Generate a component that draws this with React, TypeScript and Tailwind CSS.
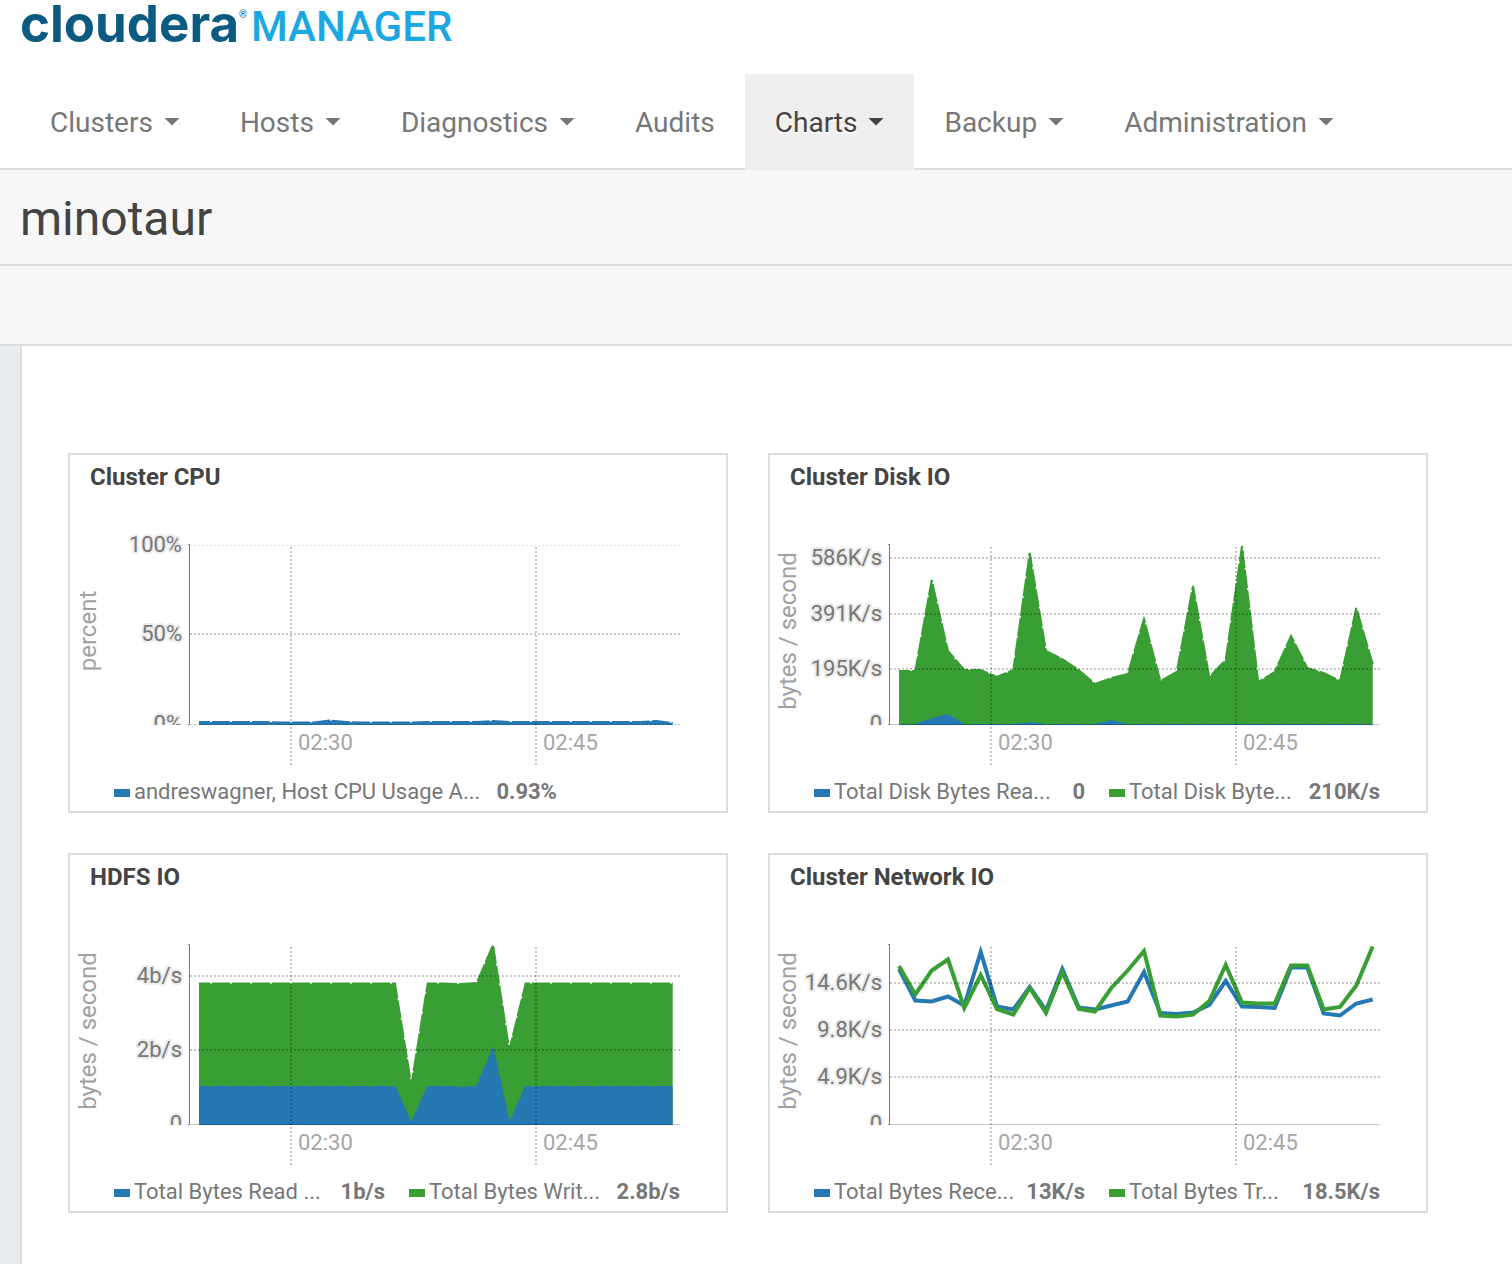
import React, { useId } from "react";

const BLUE = "#2678b2";
const GREEN = "#399e34";

type Tick = { y: number; label: string; faint?: boolean };
type Series = { color: string; values: number[] };
type LegendEntry = { color: string; name: string; value: string };
type ChartSpec = {
  title: string;
  unit: string;
  kind: "area" | "line";
  ticks: Tick[];
  zeroLabel: string;
  dottedBase?: boolean;
  series: Series[];
  legend: LegendEntry[];
};

const PLOT_LEFT = 120;
const PLOT_RIGHT = 610;
const BASE = 224;
const FIRST_X = 129;
const STEP = 49 / 3;

const charts: ChartSpec[] = [
  {
    title: "Cluster CPU",
    unit: "percent",
    kind: "area",
    ticks: [
      { y: 45, label: "100%", faint: true },
      { y: 134, label: "50%" },
    ],
    zeroLabel: "0%",
    dottedBase: true,
    series: [
      {
        color: BLUE,
        values: [
          222, 222, 222, 222, 222, 222.5, 222.5, 222.5, 220.5, 222, 222.5, 222.5, 222.5, 222.5, 222, 222, 222, 222,
          221, 222, 222, 222, 222, 222, 222, 222, 222, 222, 221, 223,
        ],
      },
    ],
    legend: [{ color: BLUE, name: "andreswagner, Host CPU Usage A...", value: "0.93%" }],
  },
  {
    title: "Cluster Disk IO",
    unit: "bytes / second",
    kind: "area",
    ticks: [
      { y: 58, label: "586K/s" },
      { y: 114, label: "391K/s" },
      { y: 169, label: "195K/s" },
    ],
    zeroLabel: "0",
    series: [
      {
        color: GREEN,
        values: [
          171, 171, 80, 151, 170, 170, 177, 170, 53, 151, 159, 170, 184, 178, 174, 119, 181, 172, 86, 177, 160, 46,
          182, 172, 136, 168, 173, 181, 108, 164,
        ],
      },
      {
        color: BLUE,
        values: [
          225, 225, 219, 215, 225, 225, 225, 225, 223, 225, 225, 225, 225, 221, 225, 225, 225, 225, 225, 225, 225,
          225, 225, 225, 225, 225, 225, 225, 225, 225,
        ],
      },
    ],
    legend: [
      { color: BLUE, name: "Total Disk Bytes Rea...", value: "0" },
      { color: GREEN, name: "Total Disk Byte...", value: "210K/s" },
    ],
  },
  {
    title: "HDFS IO",
    unit: "bytes / second",
    kind: "area",
    ticks: [
      { y: 76, label: "4b/s" },
      { y: 150, label: "2b/s" },
    ],
    zeroLabel: "0",
    series: [
      {
        color: GREEN,
        values: [
          83.5, 83.5, 83.5, 83.5, 83.5, 83.5, 83.5, 83.5, 83.5, 83.5, 83.5, 83.5, 83.5, 185, 83.5, 83.5, 84, 83, 45,
          150, 83.5, 83.5, 83.5, 83.5, 83.5, 83.5, 83.5, 83.5, 83.5, 83.5,
        ],
      },
      {
        color: BLUE,
        values: [
          187, 187, 187, 187, 187, 187, 187, 187, 187, 187, 187, 187, 187, 224, 187, 187, 187.5, 187, 149, 224, 187,
          187, 187, 187, 187, 187, 187, 187, 187, 187,
        ],
      },
    ],
    legend: [
      { color: BLUE, name: "Total Bytes Read ...", value: "1b/s" },
      { color: GREEN, name: "Total Bytes Writ...", value: "2.8b/s" },
    ],
  },
  {
    title: "Cluster Network IO",
    unit: "bytes / second",
    kind: "line",
    ticks: [
      { y: 83, label: "14.6K/s" },
      { y: 130, label: "9.8K/s" },
      { y: 177, label: "4.9K/s" },
    ],
    zeroLabel: "0",
    series: [
      {
        color: BLUE,
        values: [
          69, 100.5, 101.5, 96.5, 105.5, 52, 106.5, 109.5, 87, 110.5, 69, 107.5, 109.5, 105.5, 101.5, 72, 113, 114,
          112.5, 105, 81, 106.5, 107, 108, 67.5, 67.5, 113.5, 115.5, 103.5, 99.5,
        ],
      },
      {
        color: GREEN,
        values: [
          66, 94.5, 70.5, 59.5, 108, 75, 109, 114.5, 88, 113, 72, 109, 111.5, 88, 70.5, 51, 115.5, 116.5, 114.5, 101,
          65, 102.5, 103.5, 103.5, 65.5, 65.5, 109.5, 107, 85.5, 46.5,
        ],
      },
    ],
    legend: [
      { color: BLUE, name: "Total Bytes Rece...", value: "13K/s" },
      { color: GREEN, name: "Total Bytes Tr...", value: "18.5K/s" },
    ],
  },
];

const timeMarks = [
  { x: 221, label: "02:30" },
  { x: 466, label: "02:45" },
];

function toPath(values: number[]) {
  return values.map((y, i) => `${i === 0 ? "M" : "L"}${(FIRST_X + i * STEP).toFixed(1)} ${y}`).join("");
}

function Plot({ spec }: { spec: ChartSpec }) {
  const clipId = useId();
  const lastX = (FIRST_X + (spec.series[0].values.length - 1) * STEP).toFixed(1);
  return (
    <svg viewBox="0 0 656 270" className="block w-full text-[22px]" role="img" aria-label={`${spec.title} chart`}>
      <defs>
        <clipPath id={clipId}>
          <rect x="0" y="0" width="656" height="225" />
        </clipPath>
      </defs>
      <text x="26" y="131" transform="rotate(-90 26 131)" textAnchor="middle" fill="#a0a0a0" className="text-[24px]">
        {spec.unit}
      </text>
      <g clipPath={`url(#${clipId})`}>
        {spec.series.map((s) =>
          spec.kind === "area" ? (
            <g key={s.color}>
              <path d={`${toPath(s.values)}L${lastX} 225L${FIRST_X} 225Z`} fill={s.color} />
              <path
                d={toPath(s.values)}
                fill="none"
                stroke={s.color}
                strokeWidth="2"
                strokeDasharray="18 2"
                strokeDashoffset="7"
              />
            </g>
          ) : (
            <path key={s.color} d={toPath(s.values)} fill="none" stroke={s.color} strokeWidth="4" />
          ),
        )}
        <g fill="#777777" stroke="#ebebeb" strokeWidth="4" strokeLinejoin="round" textAnchor="end" style={{ paintOrder: "stroke" }}>
          {[...spec.ticks, { y: BASE, label: spec.zeroLabel }].map((t) => (
            <text key={t.label} x="112" y={t.y + 7}>
              {t.label}
            </text>
          ))}
        </g>
      </g>
      <g stroke="#000000" strokeOpacity="0.22" strokeWidth="2" strokeDasharray="2 2">
        {spec.ticks.map((t) => (
          <path
            key={t.label}
            d={`M${PLOT_LEFT} ${t.faint ? t.y + 0.5 : t.y}H${PLOT_RIGHT}`}
            strokeWidth={t.faint ? 1 : 2}
            strokeOpacity={t.faint ? 0.12 : 0.22}
          />
        ))}
        {timeMarks.map((m) => (
          <path key={m.label} d={`M${m.x} 47V265`} />
        ))}
      </g>
      <path
        d={`M${PLOT_LEFT} 224.5H${PLOT_RIGHT}`}
        stroke="#000000"
        strokeOpacity="0.22"
        strokeWidth="1"
        strokeDasharray={spec.dottedBase ? "2 2" : undefined}
      />
      <path d="M118 44.5H119.5V224.5H118" fill="none" stroke="#777777" strokeWidth="1" />
      {timeMarks.map((m) => (
        <text key={m.label} x={m.x + 7} y="250" fill="#a6a6a6">
          {m.label}
        </text>
      ))}
    </svg>
  );
}

function Legend({ entries }: { entries: LegendEntry[] }) {
  const single = entries.length === 1;
  return (
    <ul
      className={
        single
          ? "flex h-[41px] items-center pt-0.5 pr-[46px] pl-11 text-[22px]"
          : "grid h-[41px] grid-cols-2 items-center gap-6 pt-0.5 pr-[46px] pl-11 text-[22px]"
      }
    >
      {entries.map((e) => (
        <li
          key={e.name}
          className={
            single
              ? "flex items-center gap-4 whitespace-nowrap text-[#777777]"
              : "flex items-center justify-between gap-2 whitespace-nowrap text-[#777777]"
          }
        >
          <span className="flex items-center gap-1">
            <span className={e.color === BLUE ? "mt-0.5 h-2 w-4 bg-[#2678b2]" : "mt-0.5 h-2 w-4 bg-[#399e34]"} />
            {e.name}
          </span>
          <strong className="font-bold">{e.value}</strong>
        </li>
      ))}
    </ul>
  );
}

function ChartCard({ spec }: { spec: ChartSpec }) {
  return (
    <section className="border-2 border-[#dcdcdc] bg-white">
      <h2 className="h-[45px] px-5 text-[24px] leading-[44px] font-bold text-[#444444]">{spec.title}</h2>
      <Plot spec={spec} />
      <Legend entries={spec.legend} />
    </section>
  );
}

const navItems = [
  { label: "Clusters", menu: true },
  { label: "Hosts", menu: true },
  { label: "Diagnostics", menu: true },
  { label: "Audits", menu: false },
  { label: "Charts", menu: true, active: true },
  { label: "Backup", menu: true },
  { label: "Administration", menu: true },
];

function Caret() {
  return (
    <svg viewBox="0 0 16 8" className="mb-0.5 h-2 w-4" fill="currentColor" aria-hidden="true">
      <path d="M0.5 0H15.5L8 7.5Z" />
    </svg>
  );
}

function NavItem({ label, menu, active }: { label: string; menu: boolean; active?: boolean }) {
  if (!menu) {
    return (
      <a href="#audits" className="flex h-24 items-center px-[30px] pt-0.5 text-[#777777]">
        {label}
      </a>
    );
  }
  return (
    <button
      type="button"
      aria-haspopup="menu"
      className={
        active
          ? "flex h-24 items-center gap-[11px] bg-[#f0eeef] px-[30px] pt-0.5 text-[#444444] [text-shadow:0_2px_0_#ffffff]"
          : "flex h-24 items-center gap-[11px] px-[30px] pt-0.5 text-[#777777]"
      }
    >
      {label}
      <Caret />
    </button>
  );
}

export default function App() {
  return (
    <div className="flex min-h-screen flex-col bg-white font-['Roboto',sans-serif]">
      <header>
        <a href="#home" className="flex h-[74px] items-start pl-5 leading-[48px]">
          <span className="font-['Inter',sans-serif] text-[51px] font-bold text-[#0b5a82]">cloudera</span>
          <span className="text-[10px] leading-[30px] text-[#0b5a82]">®</span>
          <span className="ml-1 text-[42px] leading-[54px] font-medium text-[#1ba8e0]">MANAGER</span>
        </a>
        <nav className="flex h-24 border-b-2 border-[#dcdcdc] pl-5 text-[28px]">
          {navItems.map((item) => (
            <NavItem key={item.label} {...item} />
          ))}
        </nav>
      </header>
      <div className="h-24 border-b-2 border-[#dcdcdc] bg-[#f7f7f7] px-5">
        <h1 className="text-[48px] leading-[97px] text-[#444444]">minotaur</h1>
      </div>
      <div className="h-20 border-b-2 border-[#dcdcdc] bg-[#f7f7f7]" />
      <div className="flex flex-1">
        <aside className="w-[22px] shrink-0 border-r-2 border-[#dcdcdc] bg-[#e9edf0]" />
        <main className="grid flex-1 grid-cols-2 content-start gap-10 pt-[107px] pr-[84px] pb-12 pl-[46px]">
          {charts.map((spec) => (
            <ChartCard key={spec.title} spec={spec} />
          ))}
        </main>
      </div>
    </div>
  );
}
